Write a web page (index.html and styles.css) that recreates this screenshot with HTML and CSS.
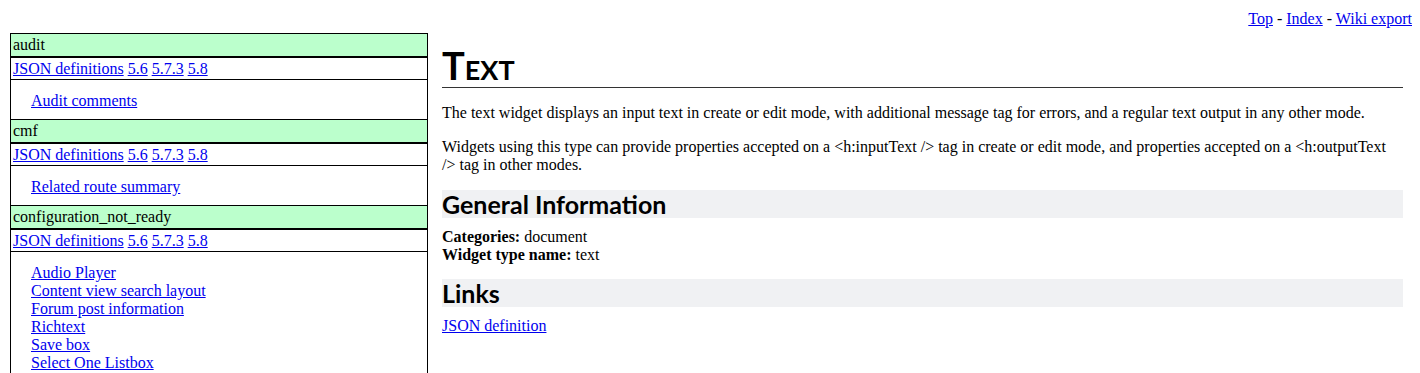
FILE: index.html
```html
<!DOCTYPE html>
<html lang="en">
<head>
	<meta charset="UTF-8">
	<title>Text widget</title>
	<link rel="stylesheet" href="styles.css">
</head>
<body>
	<div class="topnav">
		<a href="#">Top</a> - <a href="#">Index</a> - <a href="#">Wiki export</a>
	</div>
	<div class="page">
		<div class="sidebar">
			<div class="cat">audit</div>
			<div class="defs"><a href="#">JSON definitions</a> <a href="#">5.6</a> <a href="#">5.7.3</a> <a href="#">5.8</a></div>
			<ul class="items">
				<li><a href="#">Audit comments</a></li>
			</ul>
			<div class="cat">cmf</div>
			<div class="defs"><a href="#">JSON definitions</a> <a href="#">5.6</a> <a href="#">5.7.3</a> <a href="#">5.8</a></div>
			<ul class="items">
				<li><a href="#">Related route summary</a></li>
			</ul>
			<div class="cat">configuration_not_ready</div>
			<div class="defs"><a href="#">JSON definitions</a> <a href="#">5.6</a> <a href="#">5.7.3</a> <a href="#">5.8</a></div>
			<ul class="items">
				<li><a href="#">Audio Player</a></li>
				<li><a href="#">Content view search layout</a></li>
				<li><a href="#">Forum post information</a></li>
				<li><a href="#">Richtext</a></li>
				<li><a href="#">Save box</a></li>
				<li><a href="#">Select One Listbox</a></li>
			</ul>
		</div>
		<div class="main">
			<h1>Text</h1>
			<p>The text widget displays an input text in create or edit mode, with additional message tag for errors, and a regular text output in any other mode.</p>
			<p>Widgets using this type can provide properties accepted on a &lt;h:inputText /&gt; tag in create or edit mode, and properties accepted on a &lt;h:outputText /&gt; tag in other modes.</p>
			<h2>General Information</h2>
			<div class="info">
				<b>Categories:</b> document<br>
				<b>Widget type name:</b> text
			</div>
			<h2>Links</h2>
			<div class="info">
				<a href="#">JSON definition</a>
			</div>
		</div>
	</div>
</body>
</html>
```
FILE: styles.css
```css
body{
	margin: 8px;
	font-family: "Liberation Serif", "Times New Roman", serif;
	font-size: 16px;
	line-height: 18px;
	color: #000;
	background: #fff;
}
a{
	color: #00e;
}
.topnav{
	text-align: right;
	padding-top: 2px;
	height: 18px;
}
.page{
	display: flex;
	align-items: flex-start;
}
/* left index */
.sidebar{
	width: 416px;
	margin-left: 2px;
	margin-top: 5px;
	border: 1px solid #000;
	border-bottom: none;
	flex-shrink: 0;
}
.cat{
	background: #bbffcc;
	padding: 2px 2px 2px;
	border-bottom: 2px solid #000;
}
.defs{
	padding: 2px 2px 1px;
	border-bottom: 1px solid #000;
}
.items{
	margin: 0;
	padding: 12px 2px 9px 20px;
	list-style: none;
	border-bottom: 1px solid #000;
}
/* right content */
.main{
	flex: 1;
	margin-left: 14px;
	margin-right: 9px;
}
h1{
	font-family: Lato, "DejaVu Sans", sans-serif;
	font-variant: small-caps;
	font-size: 38px;
	line-height: 40px;
	font-weight: bold;
	margin: 17px 0 0;
	padding-bottom: 2px;
	border-bottom: 1px solid #333;
}
p{
	margin: 16px 0 16px;
}
h2{
	font-family: Lato, "DejaVu Sans", sans-serif;
	font-size: 25px;
	line-height: 28px;
	font-weight: bold;
	background: #f0f1f3;
	margin: 15px 0 10px;
}
.info{
	margin-bottom: 15px;
}
```
